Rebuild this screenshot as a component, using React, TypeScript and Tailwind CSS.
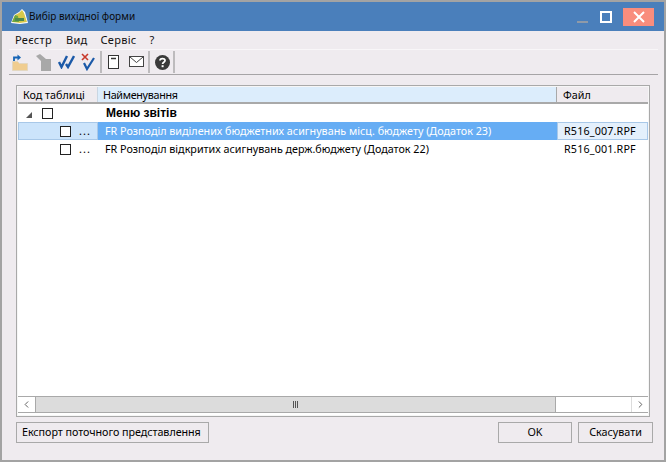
import { ChevronLeft, ChevronRight } from "lucide-react"

const font = "font-['Noto_Sans',Arial,sans-serif]"

function FolderIcon() {
  return (
    <svg width="16" height="17" viewBox="0 0 16 17">
      <path d="M0.5 7.5h5l2 2h8v7h-15z" fill="#f0cd90" stroke="#e3d7c0" />
      <path d="M2 7V3.5h5" fill="none" stroke="#1665b5" strokeWidth="1.8" />
      <path d="M5.5 0.5l3.5 3-3.5 3z" fill="#1665b5" />
    </svg>
  )
}

function TagIcon() {
  return (
    <svg width="16" height="17" viewBox="0 0 16 17">
      <path d="M0 2l4-2 6 5h5v12H5V7z" fill="#a8a8a8" />
    </svg>
  )
}

function DoubleCheck() {
  return (
    <svg width="17" height="14" viewBox="0 0 17 14">
      <path d="M1 7l2.5 5L9 1M8 9l2 3 6-11" fill="none" stroke="#1c5aa8" strokeWidth="2.4" />
    </svg>
  )
}

function CrossCheck() {
  return (
    <svg width="16" height="18" viewBox="0 0 16 18">
      <path d="M1 1l6 6M7 1L1 7" stroke="#c8392b" strokeWidth="1.6" />
      <path d="M3 10l3 6 7-11" fill="none" stroke="#1c5aa8" strokeWidth="2.2" />
    </svg>
  )
}

function NoteIcon() {
  return (
    <svg width="14" height="16" viewBox="0 0 14 16">
      <rect x="1.5" y="1.5" width="10" height="13" fill="#fff" stroke="#333" />
      <path d="M4 4.5h5" stroke="#333" strokeWidth="1.5" />
    </svg>
  )
}

function MailIcon() {
  return (
    <svg width="16" height="12" viewBox="0 0 16 12">
      <rect x="0.5" y="0.5" width="14" height="10" fill="#fff" stroke="#444" />
      <path d="M1 1l6.5 5.5L14 1" fill="none" stroke="#444" />
    </svg>
  )
}

function HelpIcon() {
  return (
    <svg width="15" height="15" viewBox="0 0 15 15">
      <circle cx="7.5" cy="7.5" r="7.5" fill="#3a3a3a" />
      <path d="M5 5.6C5 2.9 10 2.9 10 5.5c0 1.8-2.4 1.7-2.4 3.5" fill="none" stroke="#fff" strokeWidth="1.8" />
      <rect x="6.6" y="10.2" width="2" height="2" fill="#fff" />
    </svg>
  )
}

function AppLogo() {
  return (
    <svg width="18" height="16" viewBox="0 0 18 16">
      <path d="M0 14l3-8 5-3 3-3 3 3 3 11-8 1z" fill="#fff" />
      <path d="M1 13l3-7 4-2 3-3 2 3 3 9-7 1z" fill="#d8c84a" />
      <path d="M1 13l3-7 3 1 1 6z" fill="#6fa83f" />
      <path d="M4 9h9v3H4z" fill="#4d8a4d" />
    </svg>
  )
}

function Checkbox() {
  return <span className="block h-[11px] w-[11px] shrink-0 border border-[#222] bg-white" />
}

export default function App() {
  return (
    <div className={`${font} flex h-[462px] w-[666px] flex-col border-x-2 border-y-2 border-[#a3a3a3] bg-[#efebef] text-[10.75px] text-black`}>
      {/* title bar */}
      <div className="flex h-[29px] shrink-0 items-center bg-[#4a7fbb] pl-[9px]">
        <AppLogo />
        <span className="text-[10px] text-[#0a0a0a]">Вибір вихідної форми</span>
        <div className="ml-auto flex items-center">
          <span className="mt-[11px] h-[2px] w-[11px] bg-[#8f9aa8]" />
          <span className="ml-[12px] h-[12px] w-[12px] border-2 border-white" />
          <span className="ml-[11px] mr-[10px] flex h-[18px] w-[31px] items-center justify-center bg-[#f98d7d]">
            <svg width="12" height="12" viewBox="0 0 12 12">
              <path d="M1 1l10 10M11 1L1 11" stroke="#fff" strokeWidth="2" />
            </svg>
          </span>
        </div>
      </div>

      {/* menu */}
      <div className="ml-[7px] mr-[6px] flex h-[19px] shrink-0 items-center gap-[13px] border-b border-[#f8f6f8] pl-[6px] pt-[1px] text-[11px] tracking-[0.3px] text-[#111]">
        <span className="mr-[1px]">Реєстр</span>
        <span>Вид</span>
        <span>Сервіс</span>
        <span>?</span>
      </div>

      {/* toolbar */}
      <div className="ml-[7px] mr-[6px] flex h-[25px] shrink-0 items-center border-b border-[#a6a4a6]">
        <span className="ml-[3px]"><FolderIcon /></span>
        <span className="ml-[8px]"><TagIcon /></span>
        <span className="ml-[6px]"><DoubleCheck /></span>
        <span className="ml-[6px]"><CrossCheck /></span>
        <span className="ml-[3px] h-[22px] w-[2px] bg-[#bdbbbd]" />
        <span className="ml-[5px]"><NoteIcon /></span>
        <span className="ml-[8px]"><MailIcon /></span>
        <span className="ml-[3px] h-[22px] w-[2px] bg-[#bdbbbd]" />
        <span className="ml-[5px]"><HelpIcon /></span>
        <span className="ml-[3px] h-[22px] w-[2px] bg-[#bdbbbd]" />
      </div>

      {/* table */}
      <div className="ml-[14px] mt-[10px] h-[332px] w-[634px] border border-[#a9a9a9]">
        <div className="flex h-full flex-col border border-[#f6f6f6] bg-white pb-[2px]">
          <div className="flex h-[17px] shrink-0 border-b-2 border-[#a9a9a9] bg-[#efebef] leading-[16px]">
            <span className="w-[80px] border-r border-[#c9d6e2] pl-[5px]">Код таблиці</span>
            <span className="w-[459px] border-r border-[#a9a9a9] bg-[#dcedfc] pl-[5px] tracking-[-0.3px]">Найменування</span>
            <span className="flex-1 pl-[6px]">Файл</span>
          </div>

          <div className="flex h-[18px] shrink-0 items-center">
            <svg className="ml-[7px] mt-[3px]" width="8" height="8" viewBox="0 0 8 8">
              <path d="M7 1v6H1z" fill="#555" />
            </svg>
            <span className="ml-[9px]"><Checkbox /></span>
            <span className="ml-[53px] text-[12px] font-bold font-['Liberation_Sans',Arial,sans-serif]">Меню звітів</span>
          </div>

          <div className="flex h-[18px] shrink-0 items-center whitespace-nowrap">
            <div className="flex h-full w-[80px] items-center border border-[#a8c8e8] bg-[#cce4fb] pl-[41px]">
              <Checkbox />
              <span className="ml-[8px] text-[11px] tracking-[1px]">...</span>
            </div>
            <div className="flex h-full w-[459px] items-center bg-[#66adf4] pl-[7px] text-white">
              FR Розподіл виділених бюджетних асигнувань місц. бюджету (Додаток 23)
            </div>
            <div className="flex h-full flex-1 items-center border border-[#a8c8e8] bg-[#e4f0fc] pl-[6px] tracking-[0.15px]">R516_007.RPF</div>
          </div>

          <div className="flex h-[18px] shrink-0 items-center whitespace-nowrap">
            <div className="flex h-full w-[80px] items-center pl-[42px]">
              <Checkbox />
              <span className="ml-[8px] text-[11px] tracking-[1px]">...</span>
            </div>
            <div className="flex h-full w-[459px] items-center pl-[7px]">
              FR Розподіл відкритих асигнувань держ.бюджету (Додаток 22)
            </div>
            <div className="flex h-full flex-1 items-center pl-[7px] tracking-[0.15px]">R516_001.RPF</div>
          </div>

          {/* h scrollbar */}
          <div className="mt-auto flex h-[17px] shrink-0 items-center border-y border-[#a9a9a9] bg-white">
            <span className="flex h-full w-[17px] items-center justify-center">
              <ChevronLeft size={11} color="#555" />
            </span>
            <div className="flex h-full w-[521px] items-center justify-center border-x border-[#a9a9a9] bg-[#dcdcdc]">
              <span className="flex gap-[1px]">
                <i className="h-[7px] w-[1px] bg-[#555]" />
                <i className="h-[7px] w-[1px] bg-[#555]" />
                <i className="h-[7px] w-[1px] bg-[#555]" />
              </span>
            </div>
            <span className="flex-1" />
            <span className="flex h-full w-[17px] items-center justify-center border-l border-[#dcdcdc]">
              <ChevronRight size={11} color="#555" />
            </span>
          </div>
        </div>
      </div>

      {/* footer */}
      <div className="ml-[14px] mr-[11px] mt-[5px] flex gap-[6px] whitespace-nowrap">
        <button className="mr-auto h-[21px] w-[193px] border border-[#a9a9a9] pl-[5px] text-left tracking-[-0.05px]">Експорт поточного представлення</button>
        <button className="h-[21px] w-[74px] border border-[#a9a9a9]">OK</button>
        <button className="h-[21px] w-[75px] border border-[#a9a9a9]">Скасувати</button>
      </div>
    </div>
  )
}
